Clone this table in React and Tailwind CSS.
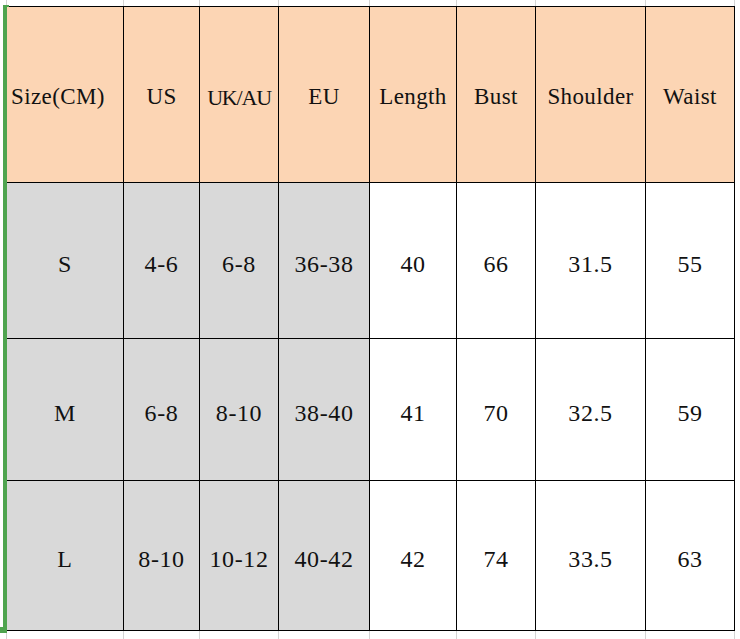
import React from 'react';

const cols = [
  { w: 'w-[117px]', label: 'Size(CM)', left: true },
  { w: 'w-[76px]', label: 'US' },
  { w: 'w-[79px]', label: 'UK/AU', tight: true },
  { w: 'w-[91px]', label: 'EU' },
  { w: 'w-[87px]', label: 'Length' },
  { w: 'w-[79px]', label: 'Bust' },
  { w: 'w-[110px]', label: 'Shoulder' },
  { w: 'w-[89px]', label: 'Waist' },
];

const rows = [
  { h: 'h-[156px]', cells: ['S', '4-6', '6-8', '36-38', '40', '66', '31.5', '55'] },
  { h: 'h-[142px]', cells: ['M', '6-8', '8-10', '38-40', '41', '70', '32.5', '59'] },
  { h: 'h-[150px]', cells: ['L', '8-10', '10-12', '40-42', '42', '74', '33.5', '63'] },
];

const font = "font-['Liberation_Serif',serif] text-[#111]";

function GridStrip({ h }) {
  return (
    <div className={`flex ${h}`}>
      <div className="w-[7px] border-r border-[#d4d4d4]" />
      {cols.map((c, i) => (
        <div key={i} className={`${c.w} border-r border-[#d4d4d4]`} />
      ))}
    </div>
  );
}

export default function App() {
  return (
    <div className={`relative w-[740px] h-[639px] bg-white overflow-hidden ${font}`}>
      <GridStrip h="h-[6px]" />
      <div className="flex">
        <div className="w-[7px] flex">
          <div className="ml-[3px] w-[4px] h-[625px] bg-[#4fa44f]" />
        </div>
        <div className="border-t border-black">
          <div className="flex h-[176px] bg-[#fcd5b4] text-[23px]">
            {cols.map((c, i) => (
              <div
                key={i}
                className={`${c.w} border-r border-b border-black flex items-center pt-[6px] ${c.tight ? 'tracking-[-1.2px] text-[22px]' : 'tracking-[0.4px]'} ${c.left ? 'justify-start pl-[4px]' : 'justify-center'}`}
              >
                {c.label}
              </div>
            ))}
          </div>
          {rows.map((r, ri) => (
            <div key={ri} className={`flex ${r.h} text-[24px] tracking-[0.6px]`}>
              {r.cells.map((v, i) => (
                <div
                  key={i}
                  className={`${cols[i].w} border-r border-b border-black flex items-center justify-center pt-[6px] ${i < 4 ? 'bg-[#d9d9d9]' : 'bg-white'}`}
                >
                  {v}
                </div>
              ))}
            </div>
          ))}
        </div>
      </div>
      <GridStrip h="h-[8px]" />
      <div className="absolute left-0 top-[627px] w-[7px] h-[6px] bg-[#4fa44f]" />
      <div className="absolute left-[3px] top-[5px] w-[6px] h-[2px] bg-[#4fa44f]" />
    </div>
  );
}
